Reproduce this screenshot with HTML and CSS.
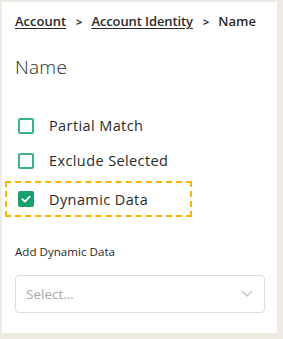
FILE: index.html
```html
<!DOCTYPE html>
<html lang="en">

<head>
    <meta charset="UTF-8">
    <meta name="viewport" content="width=device-width, initial-scale=1.0">
    <title>Name</title>
    <link rel="stylesheet" href="styles.css">
</head>

<body>

    <div class="panel">
        <nav class="crumbs">
            <a href="#">Account</a>
            <span class="sep">&gt;</span>
            <a href="#">Account Identity</a>
            <span class="sep">&gt;</span>
            <span class="current">Name</span>
        </nav>

        <h2 class="title">Name</h2>

        <div class="options">
            <label class="option">
                <span class="box"></span>
                <span>Partial Match</span>
            </label>
            <label class="option">
                <span class="box"></span>
                <span>Exclude Selected</span>
            </label>
            <label class="option option-active">
                <span class="box box-checked">
                    <svg width="12" height="12" viewBox="0 0 12 12"><path d="M2.3 6.2 L4.9 8.6 L9.7 3.6" fill="none" stroke="#fff" stroke-width="1.8" stroke-linecap="round" stroke-linejoin="round"/></svg>
                </span>
                <span>Dynamic Data</span>
            </label>
        </div><!--options end-->

        <p class="field-label">Add Dynamic Data</p>
        <div class="select">
            <span class="placeholder">Select...</span>
            <svg width="12" height="8" viewBox="0 0 12 8"><path d="M1.5 1.5 L6 6 L10.5 1.5" fill="none" stroke="#c8c8c8" stroke-width="1.5" stroke-linecap="round" stroke-linejoin="round"/></svg>
        </div>
    </div><!--panel end-->

</body>

</html>
```

FILE: styles.css
```css
body {
    margin: 0;
    padding: 2px 6px 6px 2px;
    background-color: #eeebe5;
    font-family: 'Open Sans', 'Liberation Sans', sans-serif;
    color: #2a2a2a;
}

.panel {
    width: 252px;
    height: 322px;
    padding: 9px 10px 0 13px;
    background-color: #fff;
}

.crumbs {
    display: flex;
    align-items: center;
    height: 20px;
    font-size: 13px;
    font-weight: 600;
    white-space: nowrap;
}

.crumbs a {
    color: #2a2a2a;
    text-decoration: underline;
    text-underline-offset: 2px;
}

.sep {
    margin: 0 9px 0 10px;
    font-size: 11px;
    font-weight: 700;
}

.crumbs .sep + a {
    letter-spacing: -0.1px;
}

.title {
    margin: 24px 0 0 0;
    height: 24px;
    line-height: 24px;
    font-size: 19px;
    font-weight: 300;
    letter-spacing: 0.3px;
}

.options {
    margin-top: 29px;
    display: flex;
    flex-direction: column;
    align-items: flex-start;
}

.option {
    display: flex;
    align-items: center;
    gap: 15px;
    height: 35px;
    padding-left: 3px;
    font-size: 14.5px;
    letter-spacing: 0.4px;
}

.box {
    width: 16px;
    height: 16px;
    box-sizing: border-box;
    border: 2px solid #3eb38b;
    border-radius: 2px;
    display: flex;
    align-items: center;
    justify-content: center;
}

.box-checked {
    background-color: #17a06d;
    border-color: #17a06d;
}

.option-active {
    margin: 3px 0 0 -10px;
    width: 172px;
    height: 32px;
    padding-left: 11px;
    border: 2px dashed #f7b500;
}

.field-label {
    margin: 26px 0 0 0;
    height: 18px;
    line-height: 18px;
    font-size: 11.6px;
}

.select {
    margin-top: 14px;
    height: 36px;
    border: 1px solid #dcdcdc;
    border-radius: 4px;
    display: flex;
    align-items: center;
    justify-content: space-between;
    padding: 0 11px 0 10px;
    width: 227px;
}

.placeholder {
    font-size: 13.5px;
    color: #a9a9a9;
}
```
